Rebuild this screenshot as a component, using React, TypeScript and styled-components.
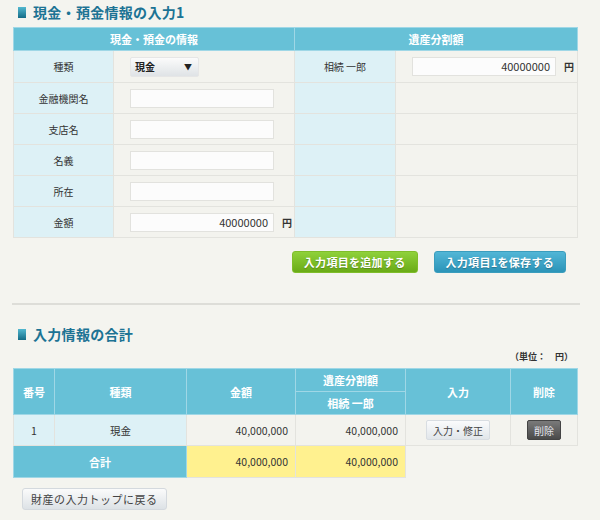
import React from "react";
import styled, { createGlobalStyle } from "styled-components";

const GlobalStyle = createGlobalStyle`
  body {
    margin: 0;
    background: #f4f4ef;
    font-family: "Noto Sans CJK JP", "Liberation Sans", sans-serif;
    font-size: 11px;
    color: #333;
  }
`;

const Page = styled.div({
  width: "600px",
  padding: "3px 0 0 13px",
  boxSizing: "border-box",
});

const Heading = styled.h2({
  margin: "0 0 6px 5px",
  display: "flex",
  alignItems: "center",
  gap: "7px",
  height: "18px",
  fontSize: "14px",
  fontWeight: "bold",
  color: "#1c7394",
  letterSpacing: "0.3px",
});

const HeadingMark = styled.span({
  width: "8px",
  height: "11px",
  background: "linear-gradient(to bottom, #52b8d0, #146b86)",
});

const Table = styled.table({
  width: "564px",
  borderCollapse: "collapse",
  tableLayout: "fixed",
});

const Head = styled.th<{ $h?: number }>((p) => ({
  background: "#67c1d7",
  color: "#fff",
  fontWeight: "bold",
  fontSize: "11px",
  height: `${p.$h ?? 22}px`,
  padding: 0,
  border: "1px solid #9fd7e6",
  textAlign: "center",
}));

const Label = styled.td<{ $h?: number }>((p) => ({
  background: "#ddf1f6",
  height: `${p.$h ?? 30}px`,
  border: "1px solid #e3e3de",
  textAlign: "center",
  padding: 0,
  fontSize: "10px",
}));

const Cell = styled.td({
  background: "#f3f3ee",
  border: "1px solid #e3e3de",
  padding: "0 0 0 16px",
});

const InputRow = styled.div({
  display: "flex",
  alignItems: "center",
  gap: "8px",
});

const TextBox = styled.div({
  width: "144px",
  height: "19px",
  boxSizing: "border-box",
  background: "#fcfcfc",
  border: "1px solid #e2e2de",
  textAlign: "right",
  padding: "0 5px",
  lineHeight: "17px",
  fontSize: "11px",
  color: "#333",
});

const Select = styled.div({
  width: "69px",
  height: "20px",
  boxSizing: "border-box",
  background: "linear-gradient(to bottom, #fbfbfb, #dfe3e6)",
  border: "1px solid #e6e6e6",
  borderRadius: "2px",
  display: "flex",
  alignItems: "center",
  justifyContent: "space-between",
  padding: "0 6px 0 4px",
  fontSize: "10px",
  fontWeight: "bold",
  color: "#222",
});

const Arrow = styled.span({ fontSize: "8px" });

const Yen = styled.span({ fontSize: "10px", fontWeight: "bold" });

const Actions = styled.div({
  width: "564px",
  boxSizing: "border-box",
  display: "flex",
  justifyContent: "flex-end",
  gap: "16px",
  padding: "13px 11px 0 0",
  height: "35px",
});

const ActionButton = styled.div<{ $tone: "green" | "blue" }>((p) => ({
  height: "22px",
  boxSizing: "border-box",
  padding: "0 11px",
  borderRadius: "3px",
  color: "#fff",
  fontWeight: "bold",
  fontSize: "11px",
  lineHeight: "21px",
  textShadow: "0 1px 1px rgba(0,0,0,0.25)",
  border: p.$tone === "green" ? "1px solid #7fbd2a" : "1px solid #3a9dbd",
  background:
    p.$tone === "green"
      ? "linear-gradient(to bottom, #8fd13a, #6aab17)"
      : "linear-gradient(to bottom, #52b6d6, #2b94b8)",
  letterSpacing: "0.3px",
}));

const Rule = styled.hr({
  margin: "30px 0 0 -1px",
  width: "568px",
  border: 0,
  borderTop: "2px solid #ddddd8",
});

const SumHeading = styled(Heading)({ marginTop: "20px", marginBottom: "0" });

const Unit = styled.div({
  width: "560px",
  textAlign: "right",
  fontSize: "9px",
  fontWeight: "bold",
  height: "14px",
  lineHeight: "14px",
  margin: "7px 0 4px",
});

const SumCell = styled.td<{ $tint?: "blue" | "yellow" | "plain"; $align?: string }>((p) => ({
  height: "30px",
  padding: "0 7px",
  fontSize: "10.5px",
  border: "1px solid #e3e3de",
  textAlign: (p.$align as any) ?? "center",
  background:
    p.$tint === "blue" ? "#ddf1f6" : p.$tint === "yellow" ? "#fff18f" : "#f3f3ee",
}));

const Blank = styled.td({ border: "none", background: "transparent" });

const SmallButton = styled.span<{ $dark?: boolean }>((p) => ({
  display: "inline-block",
  height: "20px",
  lineHeight: "20px",
  boxSizing: "border-box",
  padding: "0 6px",
  borderRadius: "2px",
  fontSize: "10px",
  color: p.$dark ? "#e6e6ee" : "#444",
  border: p.$dark ? "1px solid #444" : "1px solid #d8dde2",
  background: p.$dark
    ? "linear-gradient(to bottom, #7a7a7a, #4a4a4a)"
    : "linear-gradient(to bottom, #fafbfc, #e1e6ea)",
}));

const BackButton = styled.div({
  display: "inline-block",
  margin: "10px 0 0 9px",
  height: "22px",
  lineHeight: "21px",
  boxSizing: "border-box",
  padding: "0 8px",
  fontSize: "11px",
  letterSpacing: "0.5px",
  color: "#444",
  borderRadius: "3px",
  border: "1px solid #d4d9de",
  background: "linear-gradient(to bottom, #fbfbfb, #dde2e6)",
});

const fieldRows = ["金融機関名", "支店名", "名義", "所在"];

export default function App() {
  return (
    <Page>
      <GlobalStyle />
      <Heading>
        <HeadingMark />
        現金・預金情報の入力1
      </Heading>
      <Table>
        <colgroup>
          <col style={{ width: 100 }} />
          <col style={{ width: 181 }} />
          <col style={{ width: 101 }} />
          <col style={{ width: 182 }} />
        </colgroup>
        <thead>
          <tr>
            <Head colSpan={2}>現金・預金の情報</Head>
            <Head colSpan={2}>遺産分割額</Head>
          </tr>
        </thead>
        <tbody>
          <tr>
            <Label $h={31}>種類</Label>
            <Cell>
              <Select>
                現金<Arrow>▼</Arrow>
              </Select>
            </Cell>
            <Label>相続 一郎</Label>
            <Cell>
              <InputRow>
                <TextBox>40000000</TextBox>
                <Yen>円</Yen>
              </InputRow>
            </Cell>
          </tr>
          {fieldRows.map((name) => (
            <tr key={name}>
              <Label>{name}</Label>
              <Cell>
                <TextBox />
              </Cell>
              <Label />
              <Cell />
            </tr>
          ))}
          <tr>
            <Label>金額</Label>
            <Cell>
              <InputRow>
                <TextBox>40000000</TextBox>
                <Yen>円</Yen>
              </InputRow>
            </Cell>
            <Label />
            <Cell />
          </tr>
        </tbody>
      </Table>
      <Actions>
        <ActionButton $tone="green">入力項目を追加する</ActionButton>
        <ActionButton $tone="blue">入力項目1を保存する</ActionButton>
      </Actions>
      <Rule />
      <SumHeading>
        <HeadingMark />
        入力情報の合計
      </SumHeading>
      <Unit>（単位：　円）</Unit>
      <Table>
        <colgroup>
          <col style={{ width: 41 }} />
          <col style={{ width: 132 }} />
          <col style={{ width: 109 }} />
          <col style={{ width: 110 }} />
          <col style={{ width: 105 }} />
          <col style={{ width: 67 }} />
        </colgroup>
        <thead>
          <tr>
            <Head rowSpan={2}>番号</Head>
            <Head rowSpan={2}>種類</Head>
            <Head rowSpan={2}>金額</Head>
            <Head $h={22}>遺産分割額</Head>
            <Head rowSpan={2}>入力</Head>
            <Head rowSpan={2}>削除</Head>
          </tr>
          <tr>
            <Head $h={22}>相続 一郎</Head>
          </tr>
        </thead>
        <tbody>
          <tr>
            <SumCell $tint="blue">1</SumCell>
            <SumCell $tint="blue">現金</SumCell>
            <SumCell $align="right">40,000,000</SumCell>
            <SumCell $align="right">40,000,000</SumCell>
            <SumCell>
              <SmallButton>入力・修正</SmallButton>
            </SumCell>
            <SumCell>
              <SmallButton $dark>削除</SmallButton>
            </SumCell>
          </tr>
          <tr>
            <Head colSpan={2} $h={31}>
              合計
            </Head>
            <SumCell $tint="yellow" $align="right">
              40,000,000
            </SumCell>
            <SumCell $tint="yellow" $align="right">
              40,000,000
            </SumCell>
            <Blank />
            <Blank />
          </tr>
        </tbody>
      </Table>
      <BackButton>財産の入力トップに戻る</BackButton>
    </Page>
  );
}
